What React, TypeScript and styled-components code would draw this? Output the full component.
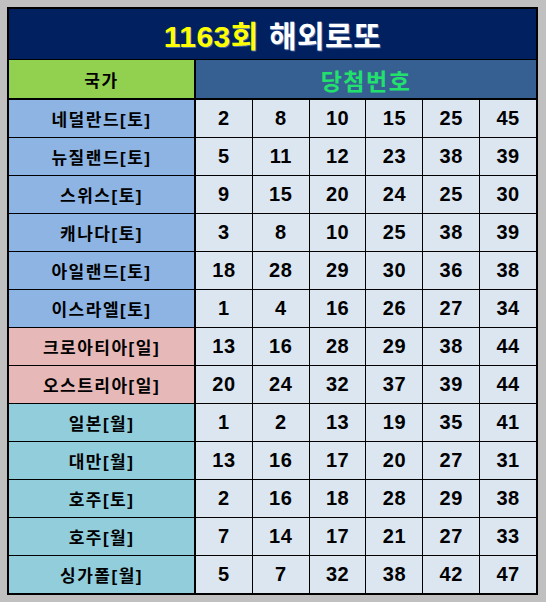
import styled, { createGlobalStyle } from "styled-components"

type Region = "eu" | "ea" | "as"

type Draw = {
    country: string
    region: Region
    numbers: number[]
}

const draws: Draw[] = [
    { country: "네덜란드[토]", region: "eu", numbers: [2, 8, 10, 15, 25, 45] },
    { country: "뉴질랜드[토]", region: "eu", numbers: [5, 11, 12, 23, 38, 39] },
    { country: "스위스[토]", region: "eu", numbers: [9, 15, 20, 24, 25, 30] },
    { country: "캐나다[토]", region: "eu", numbers: [3, 8, 10, 25, 38, 39] },
    { country: "아일랜드[토]", region: "eu", numbers: [18, 28, 29, 30, 36, 38] },
    { country: "이스라엘[토]", region: "eu", numbers: [1, 4, 16, 26, 27, 34] },
    { country: "크로아티아[일]", region: "ea", numbers: [13, 16, 28, 29, 38, 44] },
    { country: "오스트리아[일]", region: "ea", numbers: [20, 24, 32, 37, 39, 44] },
    { country: "일본[월]", region: "as", numbers: [1, 2, 13, 19, 35, 41] },
    { country: "대만[월]", region: "as", numbers: [13, 16, 17, 20, 27, 31] },
    { country: "호주[토]", region: "as", numbers: [2, 16, 18, 28, 29, 38] },
    { country: "호주[월]", region: "as", numbers: [7, 14, 17, 21, 27, 33] },
    { country: "싱가폴[월]", region: "as", numbers: [5, 7, 32, 38, 42, 47] },
]

const regionColors: Record<Region, string> = {
    eu: "#8db4e2",
    ea: "#e6b8b7",
    as: "#92cddc",
}

const GlobalStyle = createGlobalStyle`
body {
    margin: 0;
    padding: 7px;
    background-color: #c0c0c0;
    font-family: "Liberation Sans", "Noto Sans CJK KR", sans-serif;
}
`

const StyledTable = styled.div`
box-sizing: border-box;
width: 531px;
border: 2px solid #000000;
background-color: #000000;
display: grid;
grid-template-columns: 186px repeat(6, 1fr);
grid-template-rows: 50px 39px;
grid-auto-rows: 37px;
gap: 1px;
`

const StyledTitle = styled.div`
grid-column: 1 / -1;
background-color: #002060;
display: flex;
align-items: center;
justify-content: center;
gap: 10px;
font-size: 30px;
font-weight: 700;
letter-spacing: 0.5px;
text-shadow: 1px 1px 0 rgba(120, 150, 200, 0.6);
`

const StyledTitleRound = styled.span`
color: #ffff00;
`

const StyledTitleName = styled.span`
color: #ffffff;
`

const StyledHeaderCell = styled.div<{ $wide?: boolean }>`
grid-column: ${(p) => (p.$wide ? "2 / -1" : "1")};
box-sizing: border-box;
border-bottom: 1px solid #000000;
border-right: ${(p) => (p.$wide ? "none" : "1px solid #000000")};
background-color: ${(p) => (p.$wide ? "#366092" : "#92d050")};
color: ${(p) => (p.$wide ? "#22e06c" : "#000000")};
font-size: ${(p) => (p.$wide ? "23px" : "17px")};
font-weight: 700;
letter-spacing: 1.5px;
display: flex;
align-items: center;
justify-content: center;
padding-top: 1px;
`

const StyledCountryCell = styled.div<{ $color: string }>`
box-sizing: border-box;
border-right: 1px solid #000000;
background-color: ${(p) => p.$color};
color: #000000;
font-size: 17px;
font-weight: 700;
letter-spacing: 1.5px;
display: flex;
align-items: center;
justify-content: center;
`

const StyledNumberCell = styled.div`
background-color: #dce6f1;
color: #000000;
font-size: 20px;
font-weight: 700;
letter-spacing: 0.5px;
display: flex;
align-items: center;
justify-content: center;
`

export default function App() {
    return (
        <>
            <GlobalStyle />
            <StyledTable>
                <StyledTitle>
                    <StyledTitleRound>1163회</StyledTitleRound>
                    <StyledTitleName>해외로또</StyledTitleName>
                </StyledTitle>
                <StyledHeaderCell>국가</StyledHeaderCell>
                <StyledHeaderCell $wide>당첨번호</StyledHeaderCell>
                {draws.map((draw) => (
                    <>
                        <StyledCountryCell key={draw.country} $color={regionColors[draw.region]}>
                            {draw.country}
                        </StyledCountryCell>
                        {draw.numbers.map((n, i) => (
                            <StyledNumberCell key={draw.country + i}>{n}</StyledNumberCell>
                        ))}
                    </>
                ))}
            </StyledTable>
        </>
    )
}
